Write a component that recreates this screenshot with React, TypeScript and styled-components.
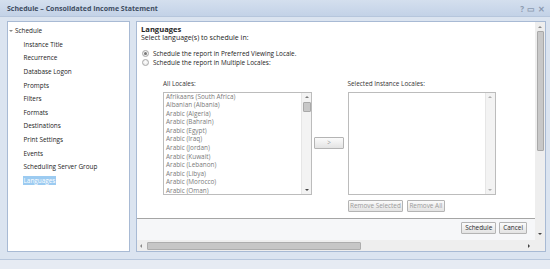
import React from "react";
import styled, { createGlobalStyle, css } from "styled-components";

const GlobalStyle = createGlobalStyle`
  html, body { margin: 0; padding: 0; background: #dbe4f0; }
  * { box-sizing: border-box; }
`;

const FONT = `"Open Sans", "Noto Sans", sans-serif`;

const Window = styled.div`
  width: 550px;
  height: 269px;
  display: flex;
  flex-direction: column;
  background: #dbe4f0;
  overflow: hidden;
  font-family: ${FONT};
  font-size: 6.4px;
  color: #222;
`;

const TitleBar = styled.div`
  height: 17px;
  flex: none;
  display: flex;
  align-items: center;
  justify-content: space-between;
  padding: 0 5px 0 7px;
  background: linear-gradient(#d4dfee, #c3d2e7);
  border-bottom: 1px solid #b6c6dc;
`;

const Title = styled.div`
  font-weight: 700;
  font-size: 7px;
  color: #3f4d62;
`;

const TitleIcons = styled.div`
  display: flex;
  align-items: center;
  gap: 3px;
  color: #8c9ab0;
  font-size: 8px;
  font-weight: 700;
`;

const Body = styled.div`
  flex: none;
  height: 242px;
  display: flex;
  gap: 6px;
  padding: 4px 4px 7px 7px;
`;

const NavPanel = styled.div`
  width: 123px;
  flex: none;
  background: #fff;
  border: 1px solid #a8bad4;
  padding-top: 2px;
  display: flex;
  flex-direction: column;
`;

const TreeRow = styled.div<{ $child?: boolean }>`
  height: 13.6px;
  display: flex;
  align-items: center;
  gap: 1px;
  padding-left: ${(p) => (p.$child ? "14.5px" : "1px")};
  color: #222;
  white-space: nowrap;
`;

const TreeLabel = styled.span<{ $selected?: boolean }>`
  line-height: 9px;
  padding: 0 1px;
  ${(p) =>
    p.$selected &&
    css`
      background: #9ccbf1;
      color: #fff;
    `}
`;

const Arrow = styled.span<{ $dir: "up" | "down" | "left" | "right"; $color?: string }>`
  display: block;
  width: 0;
  height: 0;
  flex: none;
  ${({ $dir, $color = "#555" }) => {
    switch ($dir) {
      case "up":
        return `border-left: 2px solid transparent; border-right: 2px solid transparent; border-bottom: 2px solid ${$color};`;
      case "down":
        return `border-left: 2px solid transparent; border-right: 2px solid transparent; border-top: 2px solid ${$color};`;
      case "left":
        return `border-top: 2px solid transparent; border-bottom: 2px solid transparent; border-right: 2px solid ${$color};`;
      default:
        return `border-top: 2px solid transparent; border-bottom: 2px solid transparent; border-left: 2px solid ${$color};`;
    }
  }}
`;

const ContentPanel = styled.div`
  width: 410px;
  flex: none;
  border: 1px solid #a8bad4;
  background: #fff;
  display: flex;
  flex-direction: column;
`;

const ScrollRow = styled.div`
  height: 218px;
  display: flex;
`;

const Viewport = styled.div`
  width: 398px;
  flex: none;
  display: flex;
  flex-direction: column;
`;

const Content = styled.div`
  height: 196px;
  flex: none;
  padding: 3px 0 0 4px;
  display: flex;
  flex-direction: column;
`;

const Heading = styled.div`
  font-weight: 700;
  font-size: 7.6px;
  line-height: 9px;
  color: #1e1e1e;
`;

const SubText = styled.div`
  font-size: 7px;
  line-height: 8px;
  color: #222;
`;

const RadioGroup = styled.div`
  margin-top: 6.5px;
  display: flex;
  flex-direction: column;
`;

const RadioRow = styled.label`
  height: 9px;
  display: flex;
  align-items: center;
  gap: 4px;
  padding-left: 1px;
  color: #222;
  white-space: nowrap;
`;

const RadioDot = styled.span<{ $checked?: boolean }>`
  width: 7px;
  height: 7px;
  border-radius: 50%;
  border: 1px solid #a9a9a9;
  background: radial-gradient(circle at 50% 40%, #ffffff, #e2e2e2);
  display: flex;
  align-items: center;
  justify-content: center;
  flex: none;
  &::after {
    content: "";
    width: 3px;
    height: 3px;
    border-radius: 50%;
    background: ${(p) => (p.$checked ? "#777" : "transparent")};
  }
`;

const LocalesGrid = styled.div`
  margin: 12px 0 0 22px;
  display: grid;
  grid-template-columns: 149px 35.5px 148px;
  grid-template-rows: 9px 103.5px 11.5px;
  row-gap: 4px;
`;

const FieldLabel = styled.div<{ $col: number }>`
  grid-column: ${(p) => p.$col};
  grid-row: 1;
  line-height: 9px;
  color: #333;
  white-space: nowrap;
`;

const ListBox = styled.div<{ $col: number }>`
  grid-column: ${(p) => p.$col};
  grid-row: 2;
  border: 1px solid #bcbcbc;
  background: #fff;
  display: flex;
  overflow: hidden;
`;

const ListItems = styled.div`
  flex: 1;
  padding-left: 2px;
  overflow: hidden;
`;

const ListItem = styled.div`
  height: 8.6px;
  line-height: 8.6px;
  color: #7a7a7a;
  white-space: nowrap;
`;

const ListScroll = styled.div`
  width: 10px;
  flex: none;
  background: #f3f3f3;
  border-left: 1px solid #e6e6e6;
  display: flex;
  flex-direction: column;
  align-items: center;
  padding: 3px 0 3px;
`;

const Thumb = styled.div<{ $w: number; $h: number; $top: number }>`
  width: ${(p) => p.$w}px;
  height: ${(p) => p.$h}px;
  margin-top: ${(p) => p.$top}px;
  background: #c8c8c8;
  border: 1px solid #a9a9a9;
  border-radius: 1px;
  flex: none;
`;

const Spacer = styled.div`
  flex: 1;
`;

const Button = styled.button<{ $disabled?: boolean; $tight?: boolean }>`
  height: 12px;
  padding: 0 ${(p) => (p.$tight ? "1.5px" : "3px")};
  border: 1px solid #b4b4b4;
  border-radius: 1px;
  background: linear-gradient(#fbfbfb, #e3e3e3);
  font-family: ${FONT};
  font-size: 6.4px;
  line-height: 10px;
  color: ${(p) => (p.$disabled ? "#9a9a9a" : "#2a2a2a")};
  white-space: nowrap;
  cursor: default;
`;

const MoveButton = styled(Button)`
  grid-column: 2;
  grid-row: 2;
  align-self: center;
  width: 30px;
  margin-left: 2px;
`;

const RemoveRow = styled.div`
  grid-column: 3;
  grid-row: 3;
  display: flex;
  gap: 3.5px;
  padding-top: 0.5px;
`;

const Footer = styled.div`
  flex: 1;
  border-top: 1px solid #a5a5a5;
  background: #f6f7f9;
  display: flex;
  justify-content: flex-end;
  align-items: flex-start;
  gap: 3px;
  padding: 3px 8px 0 0;
`;

const VScroll = styled.div`
  width: 10px;
  flex: none;
  background: #eeeeee;
  display: flex;
  flex-direction: column;
  align-items: center;
  padding: 4px 0 5px;
`;

const HScroll = styled.div`
  height: 11px;
  flex: none;
  background: #eeeeee;
  display: flex;
  align-items: center;
  padding: 0 0 0 3px;
`;

const HThumb = styled.div`
  width: 214px;
  height: 8px;
  margin-left: 5px;
  background: #c6c6c6;
  border: 1px solid #adadad;
  border-radius: 1px;
`;

const HEnd = styled.div`
  width: 17px;
  display: flex;
  justify-content: flex-start;
`;

const StatusStrip = styled.div`
  flex: 1;
  background: #e6ebf3;
  border-top: 1px solid #b8c7dc;
`;

const navItems = [
  "Instance Title",
  "Recurrence",
  "Database Logon",
  "Prompts",
  "Filters",
  "Formats",
  "Destinations",
  "Print Settings",
  "Events",
  "Scheduling Server Group",
  "Languages",
];

const locales = [
  "Afrikaans (South Africa)",
  "Albanian (Albania)",
  "Arabic (Algeria)",
  "Arabic (Bahrain)",
  "Arabic (Egypt)",
  "Arabic (Iraq)",
  "Arabic (Jordan)",
  "Arabic (Kuwait)",
  "Arabic (Lebanon)",
  "Arabic (Libya)",
  "Arabic (Morocco)",
  "Arabic (Oman)",
];

export default function App() {
  return (
    <>
      <GlobalStyle />
      <Window>
        <TitleBar>
          <Title>Schedule – Consolidated Income Statement</Title>
          <TitleIcons>
            <span>?</span>
            <span>▭</span>
            <span>✕</span>
          </TitleIcons>
        </TitleBar>
        <Body>
          <NavPanel>
            <TreeRow>
              <Arrow $dir="down" $color="#8a8a8a" />
              <TreeLabel>Schedule</TreeLabel>
            </TreeRow>
            {navItems.map((n) => (
              <TreeRow key={n} $child>
                <TreeLabel $selected={n === "Languages"}>{n}</TreeLabel>
              </TreeRow>
            ))}
          </NavPanel>
          <ContentPanel>
            <ScrollRow>
              <Viewport>
                <Content>
                  <Heading>Languages</Heading>
                  <SubText>Select language(s) to schedule in:</SubText>
                  <RadioGroup>
                    <RadioRow>
                      <RadioDot $checked />
                      Schedule the report in Preferred Viewing Locale.
                    </RadioRow>
                    <RadioRow>
                      <RadioDot />
                      Schedule the report in Multiple Locales:
                    </RadioRow>
                  </RadioGroup>
                  <LocalesGrid>
                    <FieldLabel $col={1}>All Locales:</FieldLabel>
                    <FieldLabel $col={3}>Selected Instance Locales:</FieldLabel>
                    <ListBox $col={1}>
                      <ListItems>
                        {locales.map((l) => (
                          <ListItem key={l}>{l}</ListItem>
                        ))}
                      </ListItems>
                      <ListScroll>
                        <Arrow $dir="up" $color="#7a7a7a" />
                        <Thumb $w={8} $h={10.5} $top={4} />
                        <Spacer />
                        <Arrow $dir="down" $color="#444" />
                      </ListScroll>
                    </ListBox>
                    <MoveButton $disabled>&gt;</MoveButton>
                    <ListBox $col={3}>
                      <ListItems />
                      <ListScroll>
                        <Arrow $dir="up" $color="#b0b0b0" />
                        <Spacer />
                        <Arrow $dir="down" $color="#b0b0b0" />
                      </ListScroll>
                    </ListBox>
                    <RemoveRow>
                      <Button $disabled $tight>Remove Selected</Button>
                      <Button $disabled $tight>Remove All</Button>
                    </RemoveRow>
                  </LocalesGrid>
                </Content>
                <Footer>
                  <Button>Schedule</Button>
                  <Button>Cancel</Button>
                </Footer>
              </Viewport>
              <VScroll>
                <Arrow $dir="up" $color="#8a8a8a" />
                <Thumb $w={7} $h={120} $top={3} />
                <Spacer />
                <Arrow $dir="down" $color="#444" />
              </VScroll>
            </ScrollRow>
            <HScroll>
              <Arrow $dir="left" $color="#8a8a8a" />
              <HThumb />
              <Spacer />
              <HEnd>
                <Arrow $dir="right" $color="#444" />
              </HEnd>
            </HScroll>
          </ContentPanel>
        </Body>
        <StatusStrip />
      </Window>
    </>
  );
}
